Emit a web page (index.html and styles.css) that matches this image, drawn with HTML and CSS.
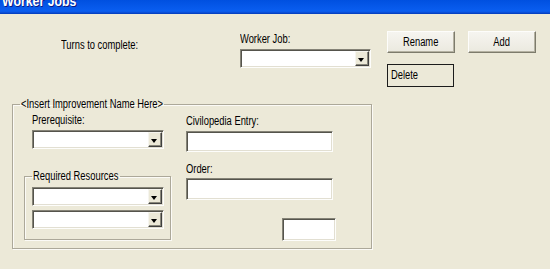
FILE: index.html
```html
<!DOCTYPE html>
<html lang="en">
  <head>
    <meta charset="UTF-8" />
    <title>Worker Jobs</title>
    <link rel="stylesheet" href="styles.css">
  </head>
  <body>
    <div class="titlebar"><div class="titlebar-text">Worker Jobs</div></div>

    <div class="top">
      <div class="turns"><span class="txt">Turns to complete:</span></div>

      <div class="job">
        <div class="label"><span class="txt">Worker Job:</span></div>
        <div class="combo combo-wide"><span class="combo-btn"></span></div>
      </div>

      <div class="actions">
        <button class="btn"><span class="txt txt-center">Rename</span></button>
        <button class="btn"><span class="txt txt-center">Add</span></button>
        <div class="btn-delete"><span class="txt">Delete</span></div>
      </div>
    </div>

    <fieldset class="group">
      <legend class="legend-main"><span class="txt">&lt;Insert Improvement Name Here&gt;</span></legend>
      <div class="group-body">
        <div class="col-left">
          <div class="label label-pre"><span class="txt">Prerequisite:</span></div>
          <div class="combo"><span class="combo-btn"></span></div>

          <fieldset class="subgroup">
            <legend class="legend-res"><span class="txt">Required Resources</span></legend>
            <div class="combo"><span class="combo-btn"></span></div>
            <div class="combo"><span class="combo-btn"></span></div>
          </fieldset>
        </div>

        <div class="col-right">
          <div class="label label-civ"><span class="txt">Civilopedia Entry:</span></div>
          <div class="field field-civ"></div>
          <div class="label label-order"><span class="txt">Order:</span></div>
          <div class="field field-order"></div>
          <div class="field field-small"></div>
        </div>
      </div>
    </fieldset>
  </body>
</html>
```

FILE: styles.css
```css
* {
  box-sizing: border-box;
}

body {
  margin: 0;
  width: 550px;
  height: 269px;
  overflow: hidden;
  background-color: #ece9d8;
  font-family: "Liberation Sans", Arial, sans-serif;
  font-size: 12px;
  line-height: 13px;
  color: #000;
}

/* the dialog font is narrower than anything installed, so squeeze it */
.txt {
  display: inline-block;
  white-space: nowrap;
  transform: scaleX(0.78);
  transform-origin: left center;
}

.txt-center {
  transform-origin: center center;
}

.titlebar {
  height: 14px;
  overflow: hidden;
  background: linear-gradient(#0050e0, #0a5ef0 80%, #0a4ad0 92%, #003bb8);
}

/* only the lower half of the caption is inside the crop */
.titlebar-text {
  margin: -6px 0 0 2px;
  font-weight: bold;
  font-size: 14px;
  line-height: 15px;
  color: #fff;
  white-space: nowrap;
  text-shadow: 1px 1px 0 #0a1883;
  transform: scaleX(0.88);
  transform-origin: left center;
}

/* top row */

.top {
  display: flex;
  height: 84px;
}

.turns {
  width: 179px;
  margin: 25px 0 0 61px;
}

.job {
  width: 147px;
  padding-top: 19px;
}

.job .combo {
  margin-top: 3px;
}

.actions {
  display: grid;
  grid-template-columns: 68px 68px;
  column-gap: 13px;
  row-gap: 11px;
  align-content: start;
  padding-top: 17px;
}

.btn {
  height: 22px;
  padding: 0;
  font: inherit;
  color: #000;
  background: linear-gradient(#f6f5f0, #ebe9df);
  border: 1px solid;
  border-color: #fdfdfb #7d7b6c #7d7b6c #fdfdfb;
  box-shadow: inset -1px -1px 0 #b5b2a2;
}

.btn-delete {
  width: 67px;
  height: 23px;
  padding: 4px 0 0 3px;
  border: 1px solid #1c1c1c;
  background-color: #ece9d8;
}

/* inputs */

.label {
  height: 13px;
}

.combo,
.field {
  position: relative;
  background-color: #fff;
  border: 1px solid;
  border-color: #858377 #fdfdfb #fdfdfb #858377;
  box-shadow: inset 1px 1px 0 #55544c, inset -1px -1px 0 #e2dfd2;
}

.combo {
  width: 132px;
  height: 19px;
}

.combo-wide {
  width: 131px;
}

.combo-btn {
  position: absolute;
  top: 1px;
  right: 1px;
  bottom: 1px;
  width: 14px;
  background-color: #ece9d8;
  border: 1px solid;
  border-color: #f6f5ef #404040 #404040 #f6f5ef;
  box-shadow: inset -1px -1px 0 #8a887b;
}

.combo-btn::after {
  content: "";
  position: absolute;
  left: 2px;
  top: 6px;
  border-left: 3.5px solid transparent;
  border-right: 3.5px solid transparent;
  border-top: 4px solid #000;
}

/* groups */

.group {
  width: 360px;
  margin: 0 0 0 12px;
  padding: 0 0 7px 7px;
  border: 1px solid #aca899;
  box-shadow: 1px 1px 0 #fbfaf6, inset 1px 1px 0 #fbfaf6;
}

.group legend,
.subgroup legend {
  padding: 0 1px;
}

.legend-main {
  width: 144px;
}

.legend-res {
  width: 88px;
}

.group-body {
  display: flex;
}

.col-left {
  width: 147px;
  margin-left: 4px;
}

.label-pre {
  margin: 3px 0 0 8px;
}

.col-left > .combo {
  margin: 3px 0 0 8px;
}

.subgroup {
  width: 147px;
  margin: 21px 0 0;
  padding: 0 6px 10px 7px;
  border: 1px solid #aca899;
  box-shadow: 1px 1px 0 #fbfaf6, inset 1px 1px 0 #fbfaf6;
}

.subgroup .combo {
  margin-top: 4px;
}

.col-right {
  width: 150px;
  margin-left: 15px;
}

.label-civ {
  margin-top: 4px;
}

.field-civ {
  width: 147px;
  height: 21px;
  margin-top: 3px;
}

.label-order {
  margin-top: 11px;
}

.field-order {
  width: 147px;
  height: 22px;
  margin-top: 2px;
}

.field-small {
  width: 54px;
  height: 23px;
  margin: 18px 0 0 96px;
}
```
